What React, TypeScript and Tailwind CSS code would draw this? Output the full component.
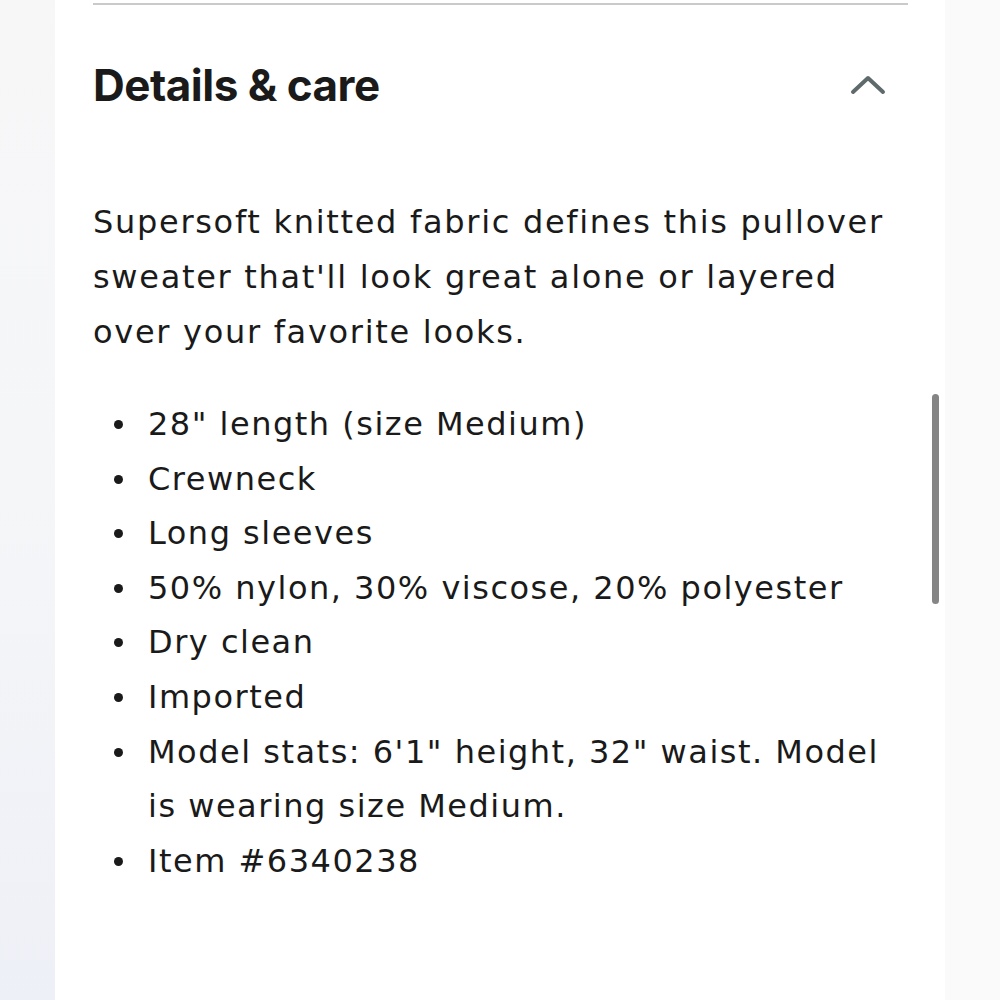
import React from "react";

export default function App() {
  const items = [
    '28" length (size Medium)',
    "Crewneck",
    "Long sleeves",
    "50% nylon, 30% viscose, 20% polyester",
    "Dry clean",
    "Imported",
    'Model stats: 6\'1" height, 32" waist. Model is wearing size Medium.',
    "Item #6340238",
  ];
  return (
    <div className="w-[1000px] h-[1000px] flex bg-[#fafafa] overflow-hidden" style={{ fontFamily: "Inter, sans-serif" }}>
      <div className="w-[55px] h-full bg-gradient-to-b from-[#f7f7f8] via-[#f5f6f8] to-[#eef0f7]" />
      <div className="w-[890px] h-full bg-white relative">
        <div className="ml-[38px] w-[815px] h-[2px] mt-[3px] bg-[#c8cacb]" />
        <div className="ml-[38px] w-[815px] flex items-center justify-between mt-[50px]">
          <h2 className="text-[44px] font-bold tracking-[-0.5px] text-[#1a1a1a] leading-[60px]">Details &amp; care</h2>
          <svg width="36" height="22" viewBox="0 0 36 22" className="mr-[22px]">
            <path d="M3 18 L18 4 L33 18" fill="none" stroke="#5f6a6c" strokeWidth="4" strokeLinecap="round" strokeLinejoin="round" />
          </svg>
        </div>
        <div className="ml-[38px] w-[815px] mt-[80px] text-[32px] leading-[55px] text-[#1a1a1a]" style={{ fontFamily: '"DejaVu Sans", sans-serif' }}>
          <p className="w-[805px] tracking-[1.7px]">Supersoft knitted fabric defines this pullover sweater that'll look great alone or layered over your favorite looks.</p>
          <ul className="mt-[37px] flex flex-col tracking-[1.5px]">
            {items.map((t) => (
              <li key={t} className="flex leading-[54.6px] w-[810px]">
                <span className="w-[55px] shrink-0 flex items-start">
                  <span className="ml-[21px] mt-[23px] w-[9px] h-[9px] rounded-full bg-[#1a1a1a]" />
                </span>
                <span>{t}</span>
              </li>
            ))}
          </ul>
        </div>
        <div className="absolute left-[877px] top-[394px] w-[7px] h-[210px] rounded-full bg-[#858585]" />
      </div>
      <div className="w-[55px] h-full bg-[#fafafa]" />
    </div>
  );
}
